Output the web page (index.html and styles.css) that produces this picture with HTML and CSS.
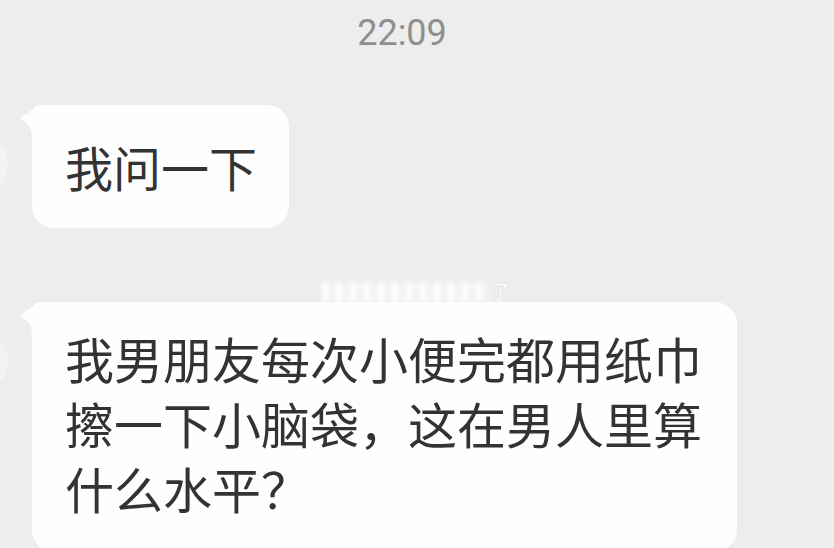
FILE: index.html
```html
<!DOCTYPE html>
<html lang="zh-CN">
<head>
    <meta charset="UTF-8">
    <meta name="viewport" content="width=device-width, initial-scale=1.0">
    <title>聊天</title>
    <link rel="stylesheet" href="styles.css">
</head>
<body>
    <div class="chat">
        <!-- Time divider -->
        <div class="time">22:09</div>

        <!-- First message -->
        <div class="msg msg-first">
            <div class="avatar"></div>
            <div class="bubble bubble-short">我问一下</div>
        </div>

        <!-- Blurred watermark line -->
        <div class="mark">
            <span class="mark-blur"></span><span class="mark-end">了</span>
        </div>

        <!-- Second message -->
        <div class="msg">
            <div class="avatar"></div>
            <div class="bubble bubble-long">我男朋友每次小便完都用纸巾擦一下小脑袋，这在男人里算什么水平？</div>
        </div>
    </div>
</body>
</html>
```

FILE: styles.css
```css
/* General Styles */
body {
    margin: 0;
    background-color: #ededed;
    font-family: "Noto Sans CJK SC", "Noto Sans", sans-serif;
    color: #333333;
    overflow: hidden;
}
.chat {
    height: 548px;
    display: flex;
    flex-direction: column;
}
.time {
    padding-top: 12px;
    padding-right: 30px;
    font-family: Roboto, "Noto Sans", sans-serif;
    font-size: 36px;
    line-height: 42px;
    color: #8f8f8f;
    text-align: center;
}

/* Message rows */
.msg {
    display: flex;
    align-items: flex-start;
    gap: 24px;
}
.msg-first {
    margin-top: 51px;
}
.avatar {
    flex: none;
    width: 64px;
    height: 64px;
    margin-left: -56px;
    margin-top: 28px;
    border-radius: 50%;
    background: #f3f3f3;
}
.bubble {
    position: relative;
    box-sizing: border-box;
    background: #fefefe;
    border-radius: 8px 22px 22px 22px;
}
.bubble::before {
    content: "";
    position: absolute;
    left: -12px;
    top: 0;
    width: 22px;
    height: 32px;
    background: #fefefe;
    clip-path: path('M0 14 Q10 5 22 0 L22 32 L12 32 Q12 20 0 14 Z');
}
.bubble-short {
    padding: 30px 32px 31px 33px;
    font-size: 48px;
    line-height: 62px;
}
.bubble-long {
    max-width: 705px;
    padding: 23px 31px 32px 33px;
    font-size: 49px;
    line-height: 65px;
}

/* Watermark */
.mark {
    height: 24px;
    margin-top: 54px;
    padding-left: 322px;
    display: flex;
    align-items: center;
}
.mark-blur {
    width: 168px;
    height: 20px;
    background: repeating-linear-gradient(90deg, rgba(255,255,255,0.9) 0 6px, rgba(255,255,255,0.3) 6px 14px);
    filter: blur(2px);
}
.mark-end {
    font-size: 20px;
    line-height: 20px;
    color: #fff;
    text-shadow: 0 0 1px #bbb;
}
```
